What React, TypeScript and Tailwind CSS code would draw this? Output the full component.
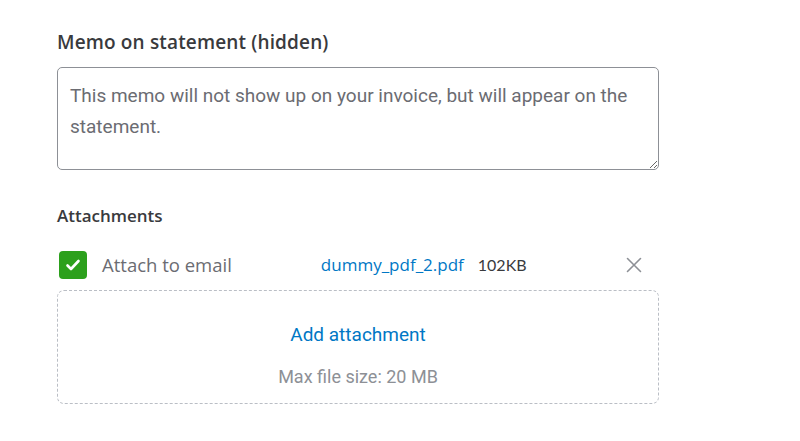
import React from "react";

export default function App() {
  return (
    <div className="w-[800px] h-[441px] bg-white">
      <div className="pl-[57px] pt-[28px] w-[659px]">
        <div className="text-[19px] leading-[28px] tracking-[0.15px] font-semibold text-[#393a3d] [font-family:'Open_Sans',sans-serif]">
          Memo on statement (hidden)
        </div>
        <textarea
          className="mt-[11px] block w-[602px] h-[103px] rounded-[5px] border border-[#8d9096] px-[12px] pt-[12px] text-[19px] leading-[31px] text-[#393a3d] placeholder:text-[#6b6c72] [font-family:Roboto,sans-serif] outline-none"
          placeholder="This memo will not show up on your invoice, but will appear on the statement."
        />
        <div className="mt-[34px] text-[17px] leading-[24px] font-semibold text-[#393a3d] [font-family:'Open_Sans',sans-serif]">
          Attachments
        </div>
        <div className="mt-[23px] flex items-center h-[28px]">
          <div className="ml-[2px] w-[28px] h-[28px] rounded-[4px] bg-[#2ca01c] flex items-center justify-center">
            <svg width="18" height="18" viewBox="0 0 18 18" fill="none">
              <path d="M3.5 9.5l3.5 3.5 7.5-8" stroke="white" strokeWidth="2.6" strokeLinecap="round" strokeLinejoin="round" />
            </svg>
          </div>
          <span className="ml-[15px] text-[18.5px] text-[#6b6c72] [font-family:'Open_Sans',sans-serif]">Attach to email</span>
          <span className="ml-[89px] text-[17px] text-[#0077c5] [font-family:'Open_Sans',sans-serif]">dummy_pdf_2.pdf</span>
          <span className="ml-[14px] text-[16px] text-[#393a3d] [font-family:Lato,sans-serif]">102KB</span>
          <svg className="ml-auto mr-[17px]" width="16" height="16" viewBox="0 0 16 16" fill="none">
            <path d="M1.5 1.5l13 13M14.5 1.5l-13 13" stroke="#8d9096" strokeWidth="1.6" strokeLinecap="round" />
          </svg>
        </div>
        <div className="mt-[11px] w-[602px] h-[114px] rounded-[7px] border border-dashed border-[#babec5] flex flex-col items-center">
          <div className="mt-[31px] text-[19px] leading-[26px] text-[#0077c5] [font-family:Roboto,sans-serif]">Add attachment</div>
          <div className="mt-[16px] text-[18px] leading-[26px] text-[#8d9096] [font-family:Roboto,sans-serif]">Max file size: 20 MB</div>
        </div>
      </div>
    </div>
  );
}
